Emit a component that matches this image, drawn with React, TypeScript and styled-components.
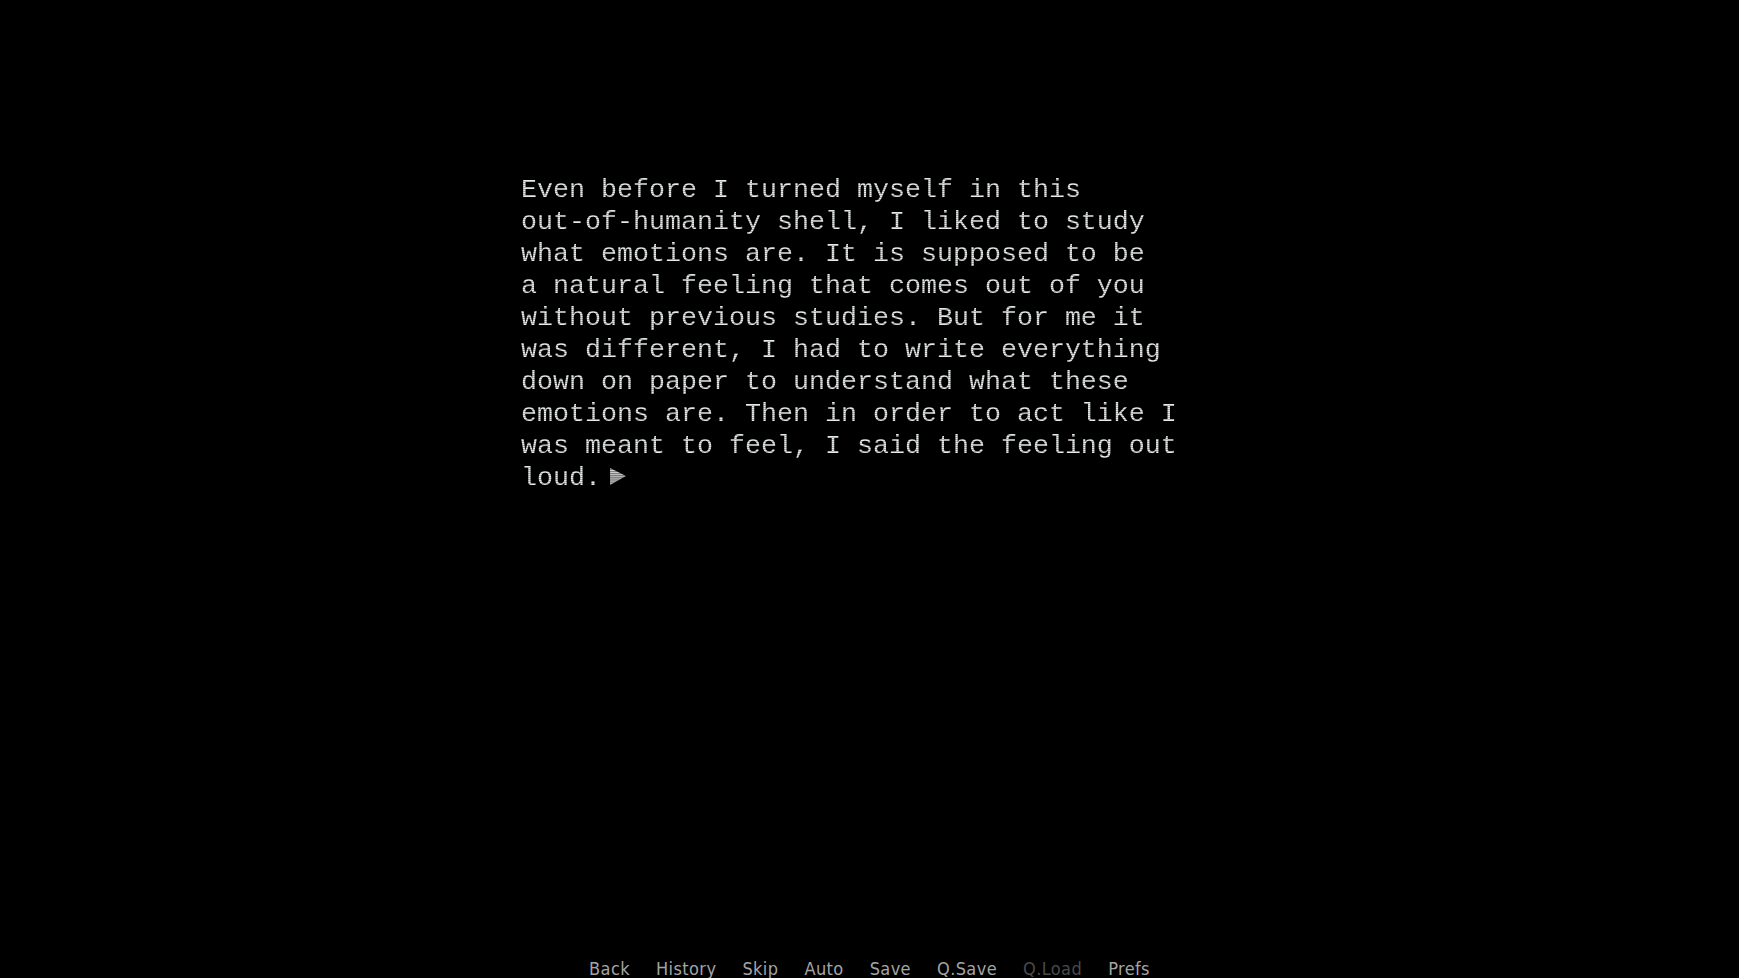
import styled, { createGlobalStyle } from 'styled-components';

const GlobalStyle = createGlobalStyle`
  html, body {
    margin: 0;
    padding: 0;
    background: #000;
    overflow: hidden;
  }
`;

const lines = [
  'Even before I turned myself in this',
  'out-of-humanity shell, I liked to study',
  'what emotions are. It is supposed to be',
  'a natural feeling that comes out of you',
  'without previous studies. But for me it',
  'was different, I had to write everything',
  'down on paper to understand what these',
  'emotions are. Then in order to act like I',
  'was meant to feel, I said the feeling out',
];

const menu = ['Back', 'History', 'Skip', 'Auto', 'Save', 'Q.Save', 'Q.Load', 'Prefs'];

const App = () => {
  return (
    <Screen>
      <GlobalStyle />
      <Dialogue>
        {lines.map((l) => (
          <Line key={l}>{l}</Line>
        ))}
        <Line>
          loud.
          <CtcArrow viewBox="0 0 16 16" aria-hidden>
            <defs>
              <pattern id="scan" width="16" height="2" patternUnits="userSpaceOnUse">
                <rect width="16" height="1" fill="#d4d4d4" />
                <rect y="1" width="16" height="1" fill="#8c8c8c" />
              </pattern>
            </defs>
            <path d="M1 0 L16 7.5 L1 16 Z" fill="url(#scan)" />
          </CtcArrow>
        </Line>
      </Dialogue>
      <QuickMenu>
        {menu.map((m) => (
          <MenuItem key={m} $disabled={m === 'Q.Load'}>{m}</MenuItem>
        ))}
      </QuickMenu>
    </Screen>
  );
};

export default App;

const Screen = styled.div`
  width: 100vw;
  height: 100vh;
  background: #000;
  display: flex;
  flex-direction: column;
`;

const Dialogue = styled.div`
  padding: 174px 0 0 521px;
  flex: 1;
`;

const Line = styled.div`
  font-family: "Liberation Mono", "DejaVu Sans Mono", monospace;
  font-size: 26.67px;
  line-height: 32px;
  height: 32px;
  white-space: pre;
  display: flex;
  align-items: center;
  background: repeating-linear-gradient(
    to bottom,
    #e6ebe8 0px,
    #e6ebe8 1px,
    #a9b0ad 1px,
    #a9b0ad 2px
  );
  -webkit-background-clip: text;
  background-clip: text;
  -webkit-text-fill-color: transparent;
  width: max-content;
`;

const CtcArrow = styled.svg`
  width: 17px;
  height: 17px;
  margin-left: 8px;
  margin-top: -3px;
`;

const QuickMenu = styled.div`
  display: flex;
  justify-content: center;
  gap: 26px;
  height: 18px;
`;

const MenuItem = styled.span<{ $disabled?: boolean }>`
  font-family: "DejaVu Sans Condensed", "DejaVu Sans", sans-serif;
  font-weight: 200;
  font-size: 18px;
  line-height: 18px;
  letter-spacing: 0.4px;
  color: ${(p) => (p.$disabled ? '#4a4a4a' : '#a4a4a4')};
`;
